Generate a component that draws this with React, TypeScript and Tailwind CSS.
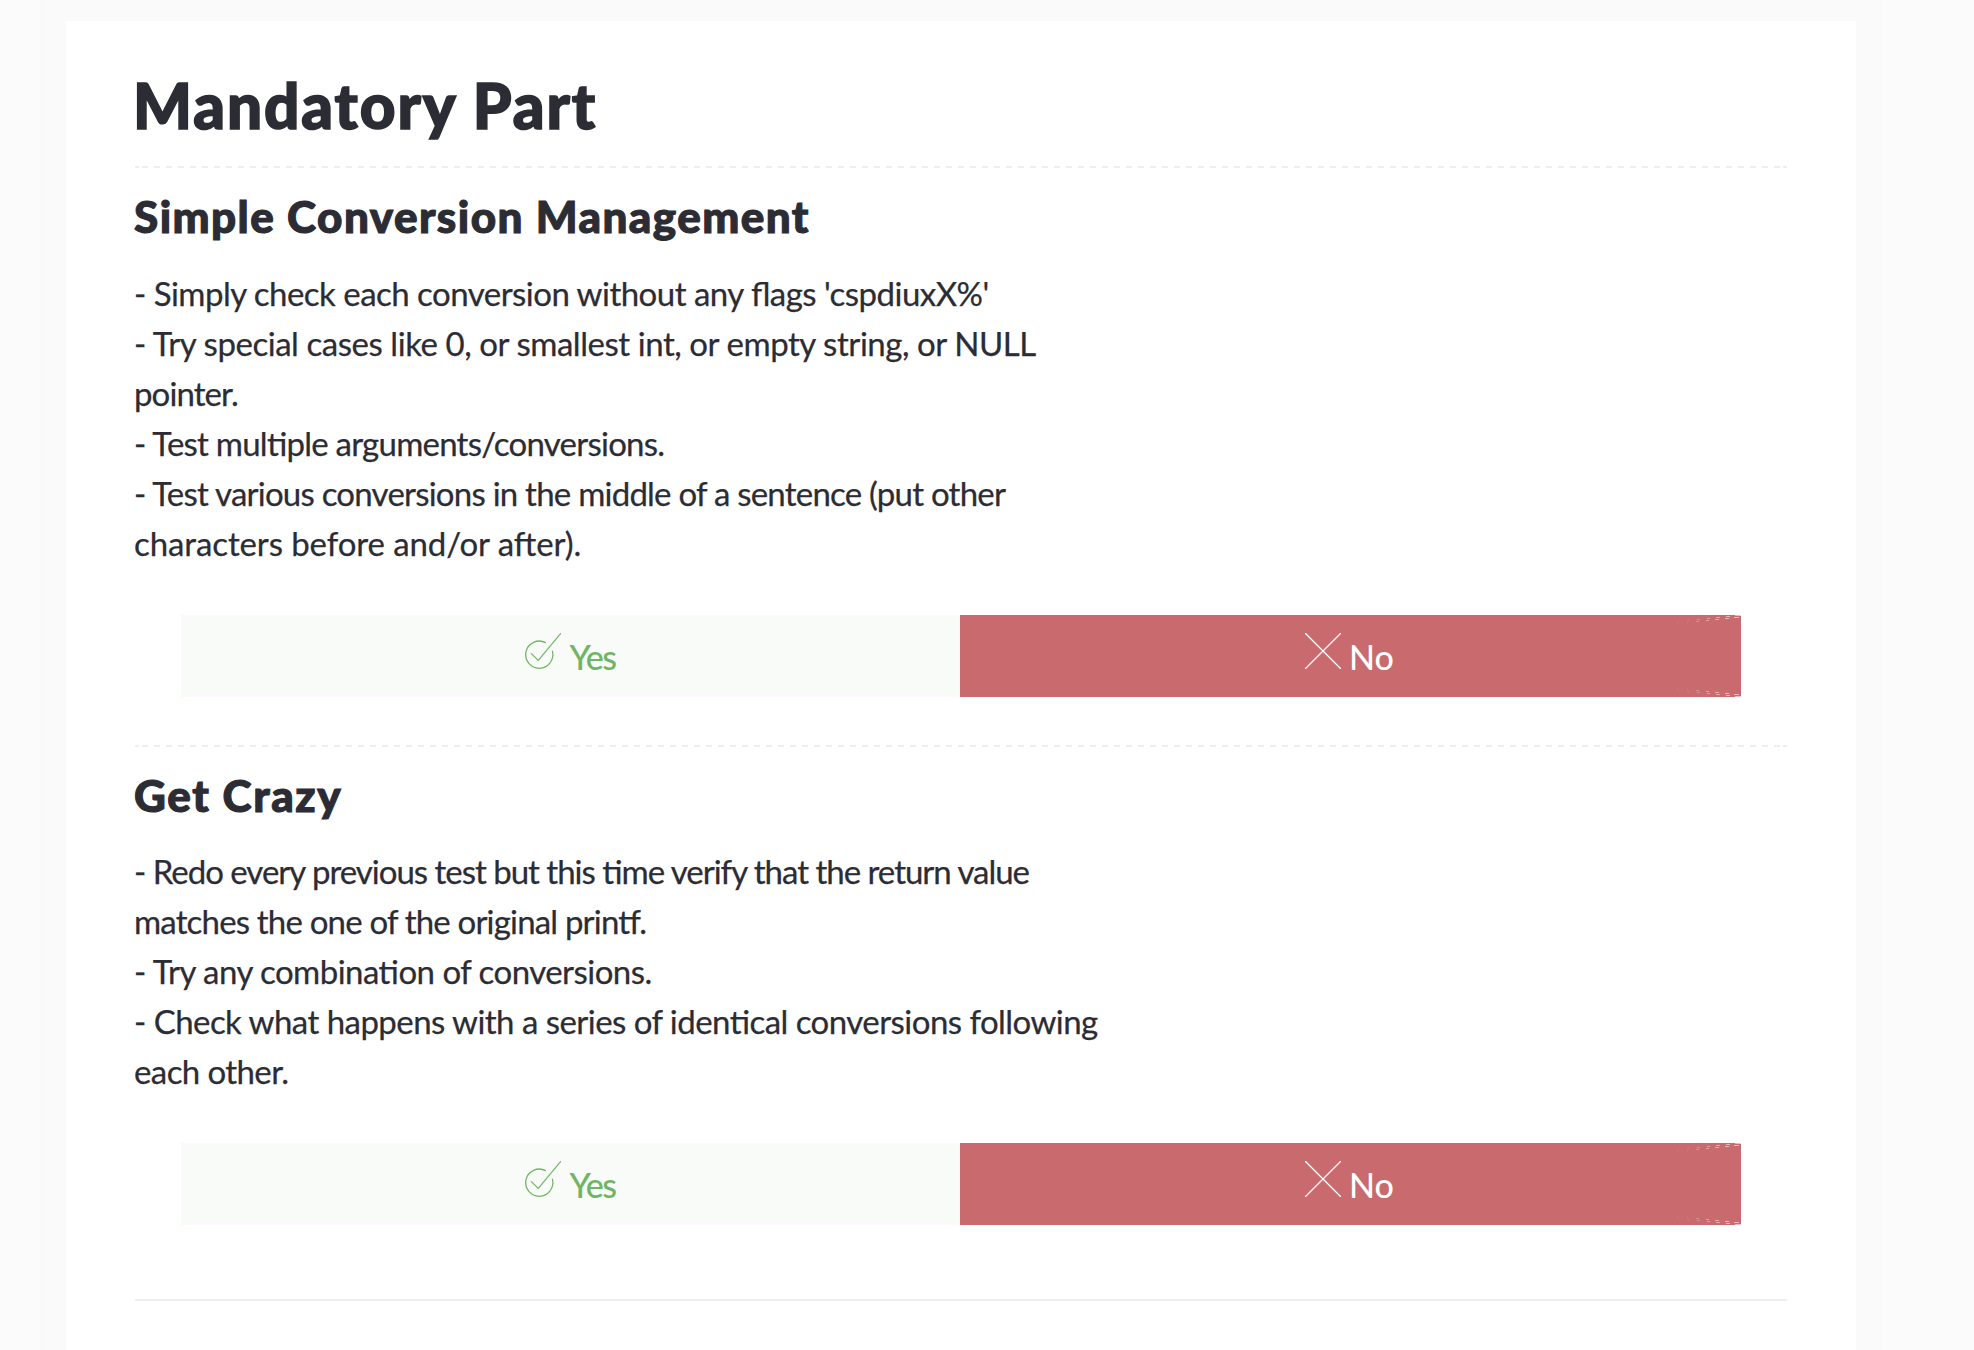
type Line = { text: string; tracking: string };

const conversionLines: Line[] = [
  { text: "- Simply check each conversion without any flags 'cspdiuxX%'", tracking: "tracking-[-0.52px]" },
  { text: "- Try special cases like 0, or smallest int, or empty string, or NULL", tracking: "tracking-[-0.45px]" },
  { text: "pointer.", tracking: "tracking-[-0.9px]" },
  { text: "- Test multiple arguments/conversions.", tracking: "tracking-[-0.76px]" },
  { text: "- Test various conversions in the middle of a sentence (put other", tracking: "tracking-[-0.77px]" },
  { text: "characters before and/or after).", tracking: "tracking-[-0.1px]" },
];

const crazyLines: Line[] = [
  { text: "- Redo every previous test but this time verify that the return value", tracking: "tracking-[-1.01px]" },
  { text: "matches the one of the original printf.", tracking: "tracking-[-0.82px]" },
  { text: "- Try any combination of conversions.", tracking: "tracking-[-0.53px]" },
  { text: "- Check what happens with a series of identical conversions following", tracking: "tracking-[-0.54px]" },
  { text: "each other.", tracking: "tracking-[-0.6px]" },
];

function DashedRule() {
  return (
    <div className="flex h-[2px]">
      <div className="w-1 bg-[#eeeeee]" />
      <div className="mx-[3px] flex-1 bg-[repeating-linear-gradient(90deg,#eeeeee_0_6px,transparent_6px_12px)]" />
      <div className="w-1 bg-[#eeeeee]" />
    </div>
  );
}

function CheckIcon() {
  return (
    <svg className="mt-[18px] self-start" width="36" height="36" viewBox="0 0 36 36" fill="none" stroke="currentColor" strokeWidth="1.25" strokeLinecap="round" strokeLinejoin="round">
      <path d="M20.5 9.6A13.6 13.6 0 1 0 27.4 18.2" />
      <path d="M6.3 20.6L13.3 27.4L35.6 .6" />
    </svg>
  );
}

function CrossIcon() {
  return (
    <svg className="-ml-px mt-[18px] self-start" width="36" height="36" viewBox="0 0 36 36" fill="none" stroke="currentColor" strokeWidth="1.25" strokeLinecap="round">
      <path d="M.5 .5L35.5 35.5M35.5 .5L.5 35.5" />
    </svg>
  );
}

const cornerDashes = [
  { x: 0, y: 6, w: 1, o: 0.12 },
  { x: 10, y: 5, w: 1, o: 0.18 },
  { x: 19, y: 4, w: 3, o: 0.25 },
  { x: 29, y: 3, w: 3, o: 0.35 },
  { x: 38, y: 2, w: 4, o: 0.42 },
  { x: 48, y: 1, w: 4, o: 0.5 },
  { x: 57, y: 0, w: 5, o: 0.55 },
];

function CornerDashes() {
  return (
    <svg className="absolute top-0 right-0" width="64" height="82" viewBox="0 0 64 82" fill="#fff">
      {cornerDashes.map((d) => (
        <g key={d.x} opacity={d.o}>
          <rect x={d.x + 1} y={d.y} width={d.w} height="1" />
          <rect x={d.x} y={d.y + 2} width={d.w} height="1" />
          <rect x={d.x} y={79 - d.y} width={d.w} height="1" />
          <rect x={d.x + 1} y={81 - d.y} width={d.w} height="1" />
        </g>
      ))}
      <path d="M63 0h1v1h-1zM63 81h1v1h-1z" opacity=".7" />
    </svg>
  );
}

function Answers() {
  return (
    <div className="mx-[46px] mt-[47px] flex h-[82px] text-[34px] leading-[84px] font-medium">
      <button className="flex w-[779px] justify-center gap-2 bg-[#f9fbf9] text-[#70b565]">
        <CheckIcon />
        <span className="tracking-[-1.4px]">Yes</span>
      </button>
      <button className="relative flex flex-1 justify-center gap-2 bg-[#c96a6f] text-white">
        <CrossIcon />
        <span className="mr-px">No</span>
        <CornerDashes />
      </button>
    </div>
  );
}

function Lines({ lines }: { lines: Line[] }) {
  return (
    <div className="-ml-px text-[33px] leading-[50px] whitespace-nowrap [font-feature-settings:'liga'_1] [-webkit-text-stroke:0.25px_#2c2c34]">
      {lines.map((l) => (
        <p key={l.text} className={l.tracking}>{l.text}</p>
      ))}
    </div>
  );
}

export default function App() {
  return (
    <div className="flex h-[1350px] overflow-hidden bg-[#fbfbfb] font-['Lato',sans-serif] text-[#2c2c34]">
      <div className="ml-[40px] w-[1841px] border-x-2 border-[#f9f9f9] bg-[#fafafa] pt-[21px] pl-6">
        <main className="h-full w-[1790px] bg-white px-[69px] pt-12">
          <h1 className="-ml-0.5 mb-[25px] text-[62px] leading-[72px] font-black tracking-[1.95px] [-webkit-text-stroke:1.6px_#2c2c34]">Mandatory Part</h1>
          <section>
            <DashedRule />
            <h2 className="-ml-px mt-[22px] mb-[26px] text-[44px] leading-[52px] font-black tracking-[1.43px] [-webkit-text-stroke:1.1px_#2c2c34]">Simple Conversion Management</h2>
            <Lines lines={conversionLines} />
            <Answers />
          </section>
          <section className="mt-12">
            <DashedRule />
            <h2 className="-ml-px mt-[22px] mb-[25px] text-[44px] leading-[52px] font-black tracking-[1.65px] [-webkit-text-stroke:1.1px_#2c2c34]">Get Crazy</h2>
            <Lines lines={crazyLines} />
            <Answers />
          </section>
          <hr className="mt-[74px] border-t-2 border-[#eeeeee]" />
        </main>
      </div>
    </div>
  );
}
